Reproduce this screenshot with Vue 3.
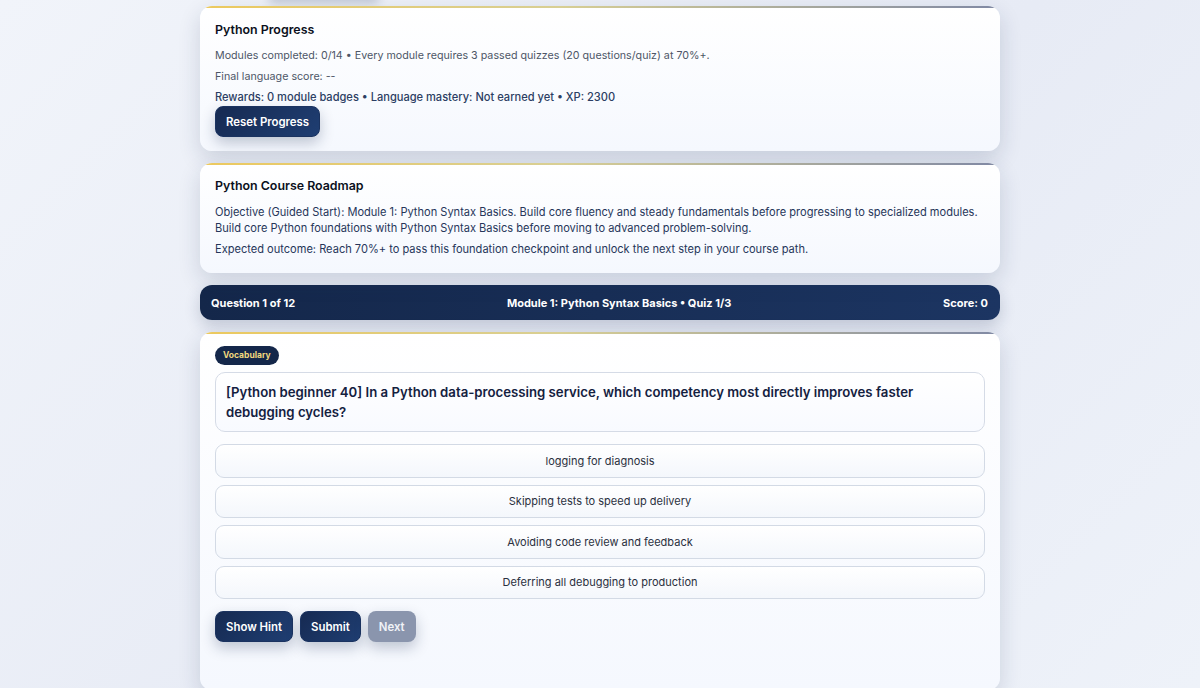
<script setup>
const options = [
  'logging for diagnosis',
  'Skipping tests to speed up delivery',
  'Avoiding code review and feedback',
  'Deferring all debugging to production'
]
</script>

<template>
  <div class="page">
    <div class="stray-shadow"></div>
    <main class="wrap">
      <section class="card">
        <h2>Python Progress</h2>
        <p class="muted">Modules completed: 0/14 • Every module requires 3 passed quizzes (20 questions/quiz) at 70%+.</p>
        <p class="muted">Final language score: --</p>
        <p class="rewards">Rewards: 0 module badges • Language mastery: Not earned yet • XP: 2300</p>
        <button class="btn reset">Reset Progress</button>
      </section>

      <section class="card roadmap">
        <h2>Python Course Roadmap</h2>
        <p class="dark">Objective (Guided Start): Module 1: Python Syntax Basics. Build core fluency and steady fundamentals before progressing to specialized modules. Build core Python foundations with Python Syntax Basics before moving to advanced problem-solving.</p>
        <p class="dark">Expected outcome: Reach 70%+ to pass this foundation checkpoint and unlock the next step in your course path.</p>
      </section>

      <header class="status">
        <span>Question 1 of 12</span>
        <span>Module 1: Python Syntax Basics • Quiz 1/3</span>
        <span>Score: 0</span>
      </header>

      <section class="card quiz">
        <span class="tag">Vocabulary</span>
        <div class="question">[Python beginner 40] In a Python data-processing service, which competency most directly improves faster debugging cycles?</div>
        <div class="options">
          <button v-for="o in options" :key="o" class="option">{{ o }}</button>
        </div>
        <div class="actions">
          <button class="btn">Show Hint</button>
          <button class="btn">Submit</button>
          <button class="btn disabled" disabled>Next</button>
        </div>
      </section>
    </main>
  </div>
</template>

<style>
html, body {
  margin: 0;
  height: 688px;
  overflow: hidden;
}
</style>

<style scoped>
.page {
  position: relative;
  height: 688px;
  overflow: hidden;
  font-family: Inter, "Noto Sans", sans-serif;
  background: linear-gradient(135deg, #f1f4fa 0%, #e7ebf5 55%, #eef2f9 100%);
}

.stray-shadow {
  position: absolute;
  left: 268px;
  top: -16px;
  width: 112px;
  height: 16px;
  border-radius: 8px;
  box-shadow: 0 4px 10px rgba(30, 50, 90, 0.2);
}

.wrap {
  width: 800px;
  margin: 0 auto;
  padding-top: 6px;
  display: flex;
  flex-direction: column;
  gap: 12px;
}

.card {
  position: relative;
  box-sizing: border-box;
  padding: 16px 15px 14px;
  border-radius: 12px;
  background: linear-gradient(180deg, #ffffff 0%, #f5f8fe 100%);
  box-shadow: 0 8px 22px rgba(24, 42, 80, 0.16);
  overflow: hidden;
}

.card::before {
  content: "";
  position: absolute;
  left: 0;
  right: 0;
  top: 0;
  height: 2px;
  background: linear-gradient(90deg, #ecc95e 0%, #d8cf94 45%, #8089a4 100%);
}

h2 {
  margin: 0 0 10px;
  font-size: 12.4px;
  line-height: 16px;
  font-weight: 600;
  color: #0b1020;
}

p {
  margin: 0 0 5px;
  font-size: 11.07px;
  line-height: 16px;
}

p:last-of-type {
  margin-bottom: 0;
}

.muted {
  font-size: 10.7px;
  color: #4d5667;
}

.muted + .muted {
  margin-bottom: 4px;
}

.dark {
  color: #26365a;
}

.rewards {
  font-size: 11.08px;
  font-weight: 500;
  color: #2c3e63;
}

.roadmap {
  padding-top: 15px;
  padding-bottom: 16px;
}

.btn {
  box-sizing: border-box;
  height: 31px;
  padding: 0 10px;
  border: 1px solid #1b3360;
  border-radius: 8px;
  font-family: inherit;
  font-size: 11.4px;
  font-weight: 600;
  color: #fff;
  background: linear-gradient(135deg, #162a52, #1f3e72);
  box-shadow: 0 6px 14px rgba(24, 42, 80, 0.25);
}

.btn.reset {
  margin-top: 1px;
}

.btn.disabled {
  border-color: transparent;
  background: #8a95ad;
  color: #f0f2f7;
}

.status {
  display: flex;
  justify-content: space-between;
  align-items: center;
  height: 35px;
  padding: 0 12px 0 11px;
  border-radius: 12px;
  font-size: 11px;
  font-weight: 700;
  color: #fff;
  background: linear-gradient(90deg, #14274a 0%, #1c3562 100%);
  box-shadow: 0 6px 16px rgba(24, 42, 80, 0.2);
}

.quiz {
  height: 358px;
  padding-top: 14px;
}

.tag {
  display: block;
  width: fit-content;
  padding: 0 8px;
  height: 19px;
  line-height: 19px;
  border-radius: 10px;
  font-size: 8.5px;
  font-weight: 700;
  color: #f1d77e;
  background: #14274a;
}

.question {
  margin-top: 7px;
  padding: 9px 10px;
  border: 1px solid #d5dbe6;
  border-radius: 10px;
  font-size: 13.2px;
  line-height: 20px;
  font-weight: 600;
  color: #14213f;
  background: linear-gradient(180deg, #fff, #f8faff);
}

.options {
  margin-top: 12px;
  display: flex;
  flex-direction: column;
  gap: 7px;
}

.option {
  height: 33.5px;
  border: 1px solid #d3dae5;
  border-radius: 9px;
  font-family: inherit;
  font-size: 11px;
  color: #2a3040;
  background: linear-gradient(180deg, #fff, #f4f7fc);
}

.actions {
  margin-top: 12px;
  display: flex;
  gap: 7px;
}
</style>
